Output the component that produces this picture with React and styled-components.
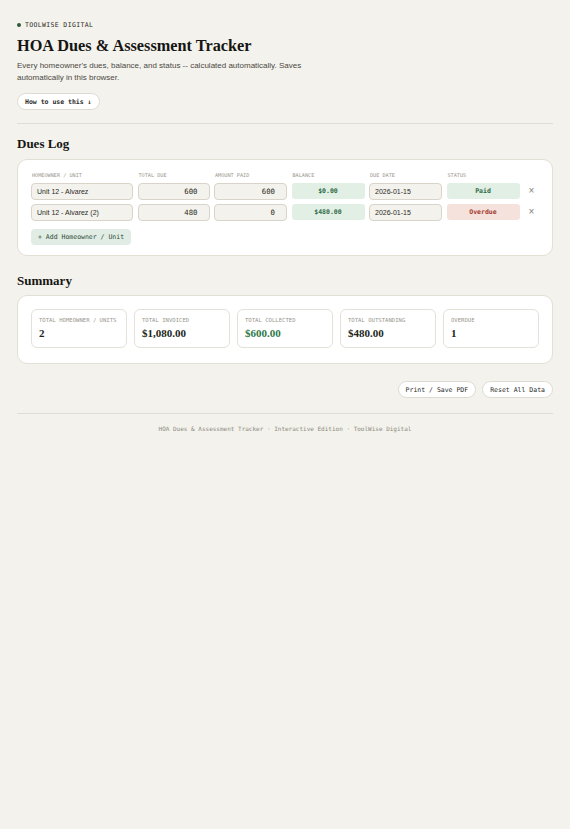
import styled, { createGlobalStyle } from 'styled-components'

const GlobalStyle = createGlobalStyle`
  html, body {
    margin: 0;
    padding: 0;
    background: #f4f2ec;
  }
  body {
    font-family: 'Liberation Sans', Arial, sans-serif;
    color: #1c1c1a;
  }
`

const mono = `'DejaVu Sans Mono', 'Liberation Mono', monospace`
const serif = `'Liberation Serif', 'Times New Roman', serif`
const sans = `'Liberation Sans', Arial, sans-serif`

const Page = styled.div`
  padding: 21px 17px 40px;
  width: 536px;
`

const Brand = styled.div`
  display: flex;
  align-items: center;
  gap: 4px;
  height: 8px;
  font-family: ${mono};
  font-size: 6.5px;
  line-height: 8px;
  letter-spacing: 0.35px;
  color: #2b2b28;
`

const Dot = styled.span`
  width: 4px;
  height: 4px;
  border-radius: 50%;
  background: #2f5a3d;
`

const Title = styled.h1`
  font-family: ${serif};
  font-weight: 700;
  font-size: 16.3px;
  line-height: 20px;
  margin: 7px 0 4px;
  color: #151513;
`

const Lead = styled.p`
  font-family: ${sans};
  font-size: 8px;
  line-height: 12px;
  color: #4a4944;
  margin: 0;
  max-width: 300px;
`

const Pill = styled.button`
  display: block;
  font-family: ${mono};
  font-weight: ${p => (p.$bold ? 700 : 400)};
  font-size: 6.5px;
  color: #2b2b28;
  background: #ffffff;
  border: 1px solid #dedbd1;
  border-radius: 9px;
  height: 17px;
  padding: 0 7px;
  margin: ${p => p.$margin || '0'};
  cursor: pointer;
`

const Rule = styled.hr`
  border: none;
  border-top: 1px solid #e0ddd4;
  margin: ${p => p.$margin || '13px 0 0'};
`

const SectionTitle = styled.h2`
  font-family: ${serif};
  font-weight: 700;
  font-size: 13px;
  line-height: 16px;
  margin: ${p => p.$margin || '12px 0 7px'};
  color: #151513;
`

const Card = styled.div`
  background: #ffffff;
  border: 1.5px solid #e2dfd4;
  border-radius: 10px;
  padding: ${p => p.$padding || '10.5px 13px 10.5px'};
`

const Grid = styled.div`
  display: grid;
  grid-template-columns: 102px 72px 73px 73px 73px 73px 1fr;
  column-gap: 4.5px;
  row-gap: 4px;
  align-items: center;
`

const HeadCell = styled.div`
  font-family: ${mono};
  font-size: 5.2px;
  line-height: 8px;
  height: 8px;
  color: #9a978d;
  padding-left: 1px;
  white-space: nowrap;
`

const Field = styled.div`
  height: 17px;
  box-sizing: border-box;
  border: 1px solid #d8d4c9;
  border-radius: 4px;
  background: #f4f2ec;
  display: flex;
  align-items: center;
  justify-content: ${p => (p.$right ? 'flex-end' : 'flex-start')};
  padding: ${p => (p.$right ? '0 11px 0 5px' : '0 5px')};
  font-family: ${p => (p.$mono ? mono : sans)};
  font-size: ${p => (p.$mono ? '7.3px' : '7px')};
  color: #2a2a27;
  white-space: nowrap;
`

const Tag = styled.div`
  height: 16px;
  border-radius: 3px;
  background: ${p => (p.$bad ? '#f6e2dc' : '#e2efe5')};
  color: ${p => (p.$bad ? '#a23b2e' : '#2e6b46')};
  display: flex;
  align-items: center;
  justify-content: center;
  font-family: ${mono};
  font-weight: 700;
  font-size: 6.5px;
`

const Remove = styled.div`
  text-align: center;
  color: #85837b;
  font-family: ${sans};
  font-size: 10px;
  line-height: 10px;
`

const AddButton = styled.button`
  display: block;
  margin-top: 8px;
  font-family: ${mono};
  font-size: 6.5px;
  color: #2e4a38;
  background: #e1ece4;
  border: none;
  border-radius: 4px;
  height: 16px;
  padding: 0 7px;
`

const Stats = styled.div`
  display: grid;
  grid-template-columns: repeat(5, 1fr);
  gap: 7px;
`

const Stat = styled.div`
  border: 1px solid #e4e1d8;
  border-radius: 6px;
  height: 39px;
  box-sizing: border-box;
  padding: 7px 7px;
`

const StatLabel = styled.div`
  font-family: ${mono};
  font-size: 5.6px;
  line-height: 6px;
  color: #9a978d;
  white-space: nowrap;
`

const StatValue = styled.div`
  font-family: ${serif};
  font-weight: 700;
  font-size: 11px;
  line-height: 13px;
  margin-top: 4.5px;
  color: ${p => (p.$green ? '#2f7a4a' : '#1c2620')};
`

const Actions = styled.div`
  display: flex;
  justify-content: flex-end;
  gap: 6px;
  margin-top: 17px;
`

const Footer = styled.div`
  text-align: center;
  font-family: ${mono};
  font-size: 6px;
  line-height: 8px;
  color: #8c8a82;
  margin-top: 11px;
`

const rows = [
  { name: 'Unit 12 - Alvarez', due: 600, paid: 600, date: '2026-01-15' },
  { name: 'Unit 12 - Alvarez (2)', due: 480, paid: 0, date: '2026-01-15' },
]

const money = n =>
  '$' + n.toLocaleString('en-US', { minimumFractionDigits: 2, maximumFractionDigits: 2 })

export default function App() {
  const invoiced = rows.reduce((s, r) => s + r.due, 0)
  const collected = rows.reduce((s, r) => s + r.paid, 0)
  const overdue = rows.filter(r => r.due - r.paid > 0).length

  return (
    <Page>
      <GlobalStyle />
      <Brand>
        <Dot />
        TOOLWISE DIGITAL
      </Brand>
      <Title>HOA Dues &amp; Assessment Tracker</Title>
      <Lead>
        Every homeowner's dues, balance, and status -- calculated automatically. Saves
        automatically in this browser.
      </Lead>
      <Pill $bold $margin="9px 0 0">How to use this ↓</Pill>
      <Rule />

      <SectionTitle>Dues Log</SectionTitle>
      <Card>
        <Grid>
          <HeadCell>HOMEOWNER / UNIT</HeadCell>
          <HeadCell>TOTAL DUE</HeadCell>
          <HeadCell>AMOUNT PAID</HeadCell>
          <HeadCell>BALANCE</HeadCell>
          <HeadCell>DUE DATE</HeadCell>
          <HeadCell>STATUS</HeadCell>
          <HeadCell />
          {rows.map(r => {
            const bal = r.due - r.paid
            return [
              <Field key={r.name + 'n'}>{r.name}</Field>,
              <Field key={r.name + 'd'} $mono $right>{r.due}</Field>,
              <Field key={r.name + 'p'} $mono $right>{r.paid}</Field>,
              <Tag key={r.name + 'b'}>{money(bal)}</Tag>,
              <Field key={r.name + 't'}>{r.date}</Field>,
              <Tag key={r.name + 's'} $bad={bal > 0}>
                {bal > 0 ? 'Overdue' : 'Paid'}
              </Tag>,
              <Remove key={r.name + 'x'}>×</Remove>,
            ]
          })}
        </Grid>
        <AddButton>+ Add Homeowner / Unit</AddButton>
      </Card>

      <SectionTitle $margin="17px 0 6px">Summary</SectionTitle>
      <Card $padding="12.5px 13px 15.5px">
        <Stats>
          <Stat>
            <StatLabel>TOTAL HOMEOWNER / UNITS</StatLabel>
            <StatValue>{rows.length}</StatValue>
          </Stat>
          <Stat>
            <StatLabel>TOTAL INVOICED</StatLabel>
            <StatValue>{money(invoiced)}</StatValue>
          </Stat>
          <Stat>
            <StatLabel>TOTAL COLLECTED</StatLabel>
            <StatValue $green>{money(collected)}</StatValue>
          </Stat>
          <Stat>
            <StatLabel>TOTAL OUTSTANDING</StatLabel>
            <StatValue>{money(invoiced - collected)}</StatValue>
          </Stat>
          <Stat>
            <StatLabel>OVERDUE</StatLabel>
            <StatValue>{overdue}</StatValue>
          </Stat>
        </Stats>
      </Card>

      <Actions>
        <Pill>Print / Save PDF</Pill>
        <Pill>Reset All Data</Pill>
      </Actions>
      <Rule $margin="15px 0 0" />
      <Footer>HOA Dues &amp; Assessment Tracker · Interactive Edition · ToolWise Digital</Footer>
    </Page>
  )
}
